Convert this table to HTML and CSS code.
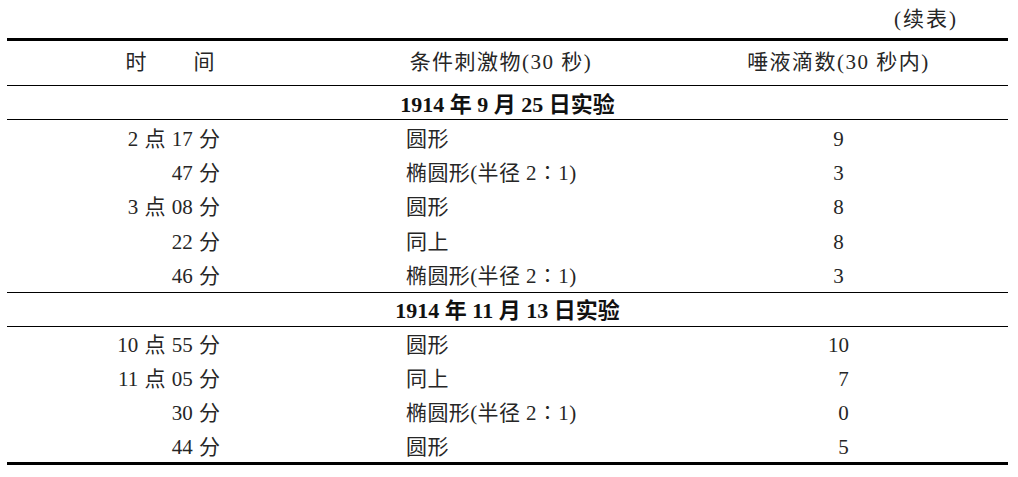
FILE: index.html
```html
<!DOCTYPE html>
<html lang="zh">
<head>
<meta charset="utf-8">
<title>续表</title>
<link rel="stylesheet" href="styles.css">
</head>
<body>
<div class="page">
  <div class="caption">(续表)</div>
  <div class="table">
    <div class="row head">
      <div class="c1"><span class="sp">时</span>间</div>
      <div class="c2">条件刺激物(30 秒)</div>
      <div class="c3">唾液滴数(30 秒内)</div>
    </div>
    <div class="group">1914 年 9 月 25 日实验</div>
    <div class="row r1"><div class="c1">2 点 17 分</div><div class="c2">圆形</div><div class="c3">9</div></div>
    <div class="row r1"><div class="c1">47 分</div><div class="c2">椭圆形(半径 2∶1)</div><div class="c3">3</div></div>
    <div class="row r1"><div class="c1">3 点 08 分</div><div class="c2">圆形</div><div class="c3">8</div></div>
    <div class="row r1"><div class="c1">22 分</div><div class="c2">同上</div><div class="c3">8</div></div>
    <div class="row r1"><div class="c1">46 分</div><div class="c2">椭圆形(半径 2∶1)</div><div class="c3">3</div></div>
    <div class="group sep">1914 年 11 月 13 日实验</div>
    <div class="row r2"><div class="c1">10 点 55 分</div><div class="c2">圆形</div><div class="c3">10</div></div>
    <div class="row r2"><div class="c1">11 点 05 分</div><div class="c2">同上</div><div class="c3"><span class="pad">7</span></div></div>
    <div class="row r2"><div class="c1">30 分</div><div class="c2">椭圆形(半径 2∶1)</div><div class="c3"><span class="pad">0</span></div></div>
    <div class="row r2"><div class="c1">44 分</div><div class="c2">圆形</div><div class="c3"><span class="pad">5</span></div></div>
  </div>
</div>
</body>
</html>
```
FILE: styles.css
```css
html, body {
  margin: 0;
  padding: 0;
  background: #ffffff;
}
body {
  font-family: "Liberation Serif", "Noto Sans CJK SC", serif;
  font-size: 21px;
  color: #262626;
}
.page {
  width: 1001px;
  padding-left: 7px;
}
.caption {
  height: 38px;
  line-height: 38px;
  text-align: right;
  padding-right: 50px;
  letter-spacing: 2px;
}
.table {
  border-top: 3px solid #000;
  border-bottom: 3px solid #000;
}
.row {
  display: grid;
  grid-template-columns: 326px 336px 339px;
  align-items: center;
}
.row > div {
  line-height: 22px;
  padding-top: 3px;
}
.head > div {
  padding-top: 0;
  padding-bottom: 3px;
  letter-spacing: 1.5px;
}
.head {
  height: 44px;
  border-bottom: 1px solid #000;
}
.r1 { height: 34.4px; }
.r2 { height: 33.75px; }
.c1 {
  text-align: right;
  padding-right: 113px;
  white-space: nowrap;
  word-spacing: 1px;
}
.c2 {
  padding-left: 73px;
  white-space: nowrap;
  letter-spacing: 0.4px;
}
.c3 {
  text-align: center;
  white-space: nowrap;
}
.head .c1 {
  text-align: center;
  padding-right: 0;
  letter-spacing: 0;
}
.head .c2 {
  text-align: center;
  padding-left: 0;
}
.sp { margin-right: 47px; }
.pad { padding-left: 10px; }
.group {
  height: 34px;
  border-bottom: 1px solid #000;
  display: flex;
  align-items: center;
  justify-content: center;
  font-weight: bold;
  font-size: 22px;
  color: #111;
  padding-bottom: 2px;
  box-sizing: border-box;
}
.group.sep {
  border-top: 1px solid #000;
  height: 35px;
}
```
